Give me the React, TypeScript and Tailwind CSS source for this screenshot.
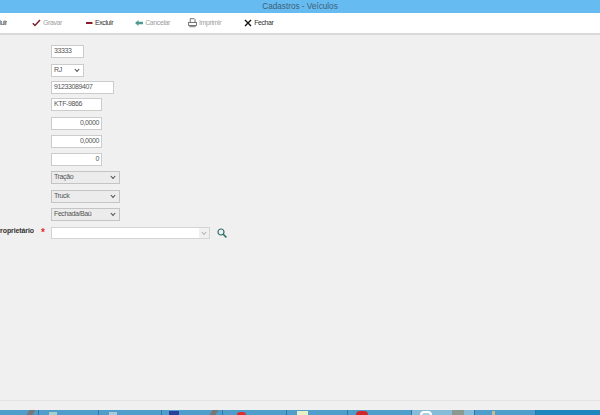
import type { ReactNode } from 'react';

function ToolButton({ icon, label, muted, className }: { icon: ReactNode; label: string; muted?: boolean; className: string }) {
  return (
    <div className={`flex shrink-0 items-center gap-[2px] ${className}`}>
      {icon}
      <span className={`text-[7px] tracking-[-0.4px] ${muted ? 'text-[#a0a0a0]' : 'font-medium text-[#333333]'}`}>{label}</span>
    </div>
  );
}

function Field({ value, width, right, className }: { value: string; width: string; right?: boolean; className: string }) {
  return (
    <div
      className={`flex h-[13px] items-center border border-[#cccccc] bg-white px-[2px] text-[7px] tracking-[-0.4px] text-[#555555] ${right ? 'justify-end' : ''} ${width} ${className}`}
    >
      {value}
    </div>
  );
}

function Chevron({ color = '#444444' }: { color?: string }) {
  return (
    <svg width="6" height="5" viewBox="0 0 6 5" fill="none">
      <path d="M0.8 1 L3 3.4 L5.2 1" stroke={color} strokeWidth="1.1" />
    </svg>
  );
}

function SelectBox({ value, className }: { value: string; className: string }) {
  return (
    <div
      className={`flex h-[13px] w-[69px] items-center justify-between border border-[#c4c4c4] bg-[#ececec] pl-[2px] pr-[3px] text-[7px] tracking-[-0.4px] text-[#555555] ${className}`}
    >
      {value}
      <Chevron color="#555555" />
    </div>
  );
}

function TaskButton({ width, active, children }: { width: string; active?: boolean; children?: ReactNode }) {
  return (
    <div className={`relative shrink-0 overflow-hidden border-r border-[#2b78a8] ${width} ${active ? 'bg-[#86bcd8]' : ''}`}>
      {children}
    </div>
  );
}

export default function App() {
  return (
    <div className="flex h-[415px] w-[600px] flex-col overflow-hidden bg-[#f0f0f0] font-['Liberation_Sans',sans-serif]">
      <div className="flex h-[13px] shrink-0 items-center justify-center bg-[#66bcf0] pt-px text-[8.2px] text-[#3d5f78]">
        Cadastros - Veículos
      </div>

      <div className="flex h-[20px] shrink-0 items-center bg-white">
        <div className="flex w-[7px] shrink-0 justify-end overflow-hidden">
          <span className="shrink-0 text-[7px] font-medium tracking-[-0.4px] text-[#333333]">Incluir</span>
        </div>
        <ToolButton
          className="ml-[25px]"
          muted
          label="Gravar"
          icon={
            <svg width="9" height="8" viewBox="0 0 9 8" fill="none">
              <path d="M0.8 4.2 L3 6.5 L8 1" stroke="#7a2030" strokeWidth="1.5" />
            </svg>
          }
        />
        <ToolButton
          className="ml-[24px]"
          label="Excluir"
          icon={
            <svg width="7" height="8" viewBox="0 0 7 8">
              <rect x="0" y="3" width="6.5" height="2" fill="#8a1c30" />
            </svg>
          }
        />
        <ToolButton
          className="ml-[22px]"
          muted
          label="Cancelar"
          icon={
            <svg width="8" height="8" viewBox="0 0 8 8">
              <path d="M0 4 L3.5 1 V2.8 H8 V5.2 H3.5 V7 Z" fill="#4e9a94" />
            </svg>
          }
        />
        <ToolButton
          className="ml-[18px]"
          muted
          label="Imprimir"
          icon={
            <svg width="9" height="10" viewBox="0 0 10 11" fill="none" stroke="#555555" strokeWidth="0.9">
              <path d="M2.5 5 V0.7 H7 L7.8 1.6 V5" />
              <rect x="0.7" y="5" width="8.6" height="3.2" />
              <path d="M1.5 9.6 H8.5" />
            </svg>
          }
        />
        <ToolButton
          className="ml-[23px]"
          label="Fechar"
          icon={
            <svg width="8" height="8" viewBox="0 0 8 8" fill="none">
              <path d="M1 1 L7 7 M7 1 L1 7" stroke="#111111" strokeWidth="1.4" />
            </svg>
          }
        />
      </div>

      <div className="h-[2px] shrink-0 bg-[#d9d9d9]" />

      <div className="flex flex-1 flex-col pl-[51px] pt-[10px]">
        <Field value="33333" width="w-[33px]" className="" />
        <div className="mt-[6px] flex h-[13px] w-[33px] items-center justify-between border border-[#cccccc] bg-white pl-[2px] pr-[3px] text-[7px] tracking-[-0.4px] text-[#555555]">
          RJ
          <Chevron color="#555555" />
        </div>
        <Field value="91233089407" width="w-[63px]" className="mt-[4px]" />
        <Field value="KTF-9866" width="w-[51px]" className="mt-[4px]" />
        <Field value="0,0000" width="w-[51px]" right className="mt-[6px]" />
        <Field value="0,0000" width="w-[51px]" right className="mt-[5px]" />
        <Field value="0" width="w-[51px]" right className="mt-[5px]" />
        <SelectBox value="Tração" className="mt-[5px]" />
        <SelectBox value="Truck" className="mt-[6px]" />
        <SelectBox value="Fechada/Baú" className="mt-[5px]" />

        <div className="ml-[-51px] mt-[6px] flex h-[12px] items-center">
          <div className="-mt-[3px] flex w-[34px] shrink-0 justify-end overflow-hidden">
            <span className="shrink-0 text-[7px] font-bold tracking-[-0.1px] text-[#333333]">Proprietário</span>
          </div>
          <span className="-mt-[1px] ml-[7px] w-[10px] text-[10px] font-bold leading-none text-[#e03030]">*</span>
          <div className="flex h-[12px] w-[159px] items-center justify-end border border-[#d4d4d4] bg-white">
            <div className="flex h-full w-[10px] items-center justify-center bg-[#f0f0f0]">
              <Chevron color="#b0b8b8" />
            </div>
          </div>
          <svg className="ml-[7px]" width="10" height="10" viewBox="0 0 10 10" fill="none" stroke="#2f6f68" strokeWidth="1.2">
            <circle cx="4" cy="4" r="3" />
            <path d="M6.2 6.2 L9.4 9.4" strokeWidth="1.6" />
          </svg>
        </div>
      </div>

      <div className="h-[1px] shrink-0 bg-[#e4e4e4]" />
      <div className="h-[9px] shrink-0 bg-[#f0f0f0]" />

      <div className="flex h-[5px] shrink-0 bg-[#4f9dca]">
        <TaskButton width="w-[39px]">
          <div className="absolute left-[28px] top-0 h-[5px] w-[6px] -skew-x-[30deg] bg-[#777777]" />
        </TaskButton>
        <TaskButton width="w-[60px]">
          <div className="absolute left-[10px] top-[2px] h-[3px] w-[8px] bg-[#a9cfc8]" />
        </TaskButton>
        <TaskButton width="w-[63px]">
          <div className="absolute left-[10px] top-[2px] h-[3px] w-[8px] bg-[#a9c8d8]" />
        </TaskButton>
        <TaskButton width="w-[61px]">
          <div className="absolute left-[7px] top-[1px] h-[4px] w-[10px] bg-[#2a3f9a]" />
          <div className="absolute left-[49px] top-0 h-[5px] w-[6px] -skew-x-[30deg] bg-[#777777]" />
        </TaskButton>
        <TaskButton width="w-[64px]">
          <div className="absolute left-[14px] top-[2px] h-[6px] w-[9px] rounded-full bg-[#d83030]" />
        </TaskButton>
        <TaskButton width="w-[61px]">
          <div className="absolute left-[10px] top-[1px] h-[4px] w-[11px] bg-[#e8efc8]" />
        </TaskButton>
        <TaskButton width="w-[64px]">
          <div className="absolute left-[8px] top-[1px] h-[8px] w-[12px] rounded-full bg-[#d02828]" />
        </TaskButton>
        <TaskButton width="w-[63px]" active>
          <div className="absolute left-[8px] top-[1px] h-[8px] w-[12px] rounded-full border-2 border-[#ffffff] bg-[#a8d0e0]" />
          <div className="absolute left-[40px] top-0 h-[5px] w-[12px] bg-[#8a9a90]" />
        </TaskButton>
        <TaskButton width="w-[61px]">
          <div className="absolute left-[17px] top-[1px] h-[4px] w-[3px] bg-[#c8b890]" />
        </TaskButton>
        <div className="flex-1 bg-[#1f86bd]" />
      </div>
    </div>
  );
}
